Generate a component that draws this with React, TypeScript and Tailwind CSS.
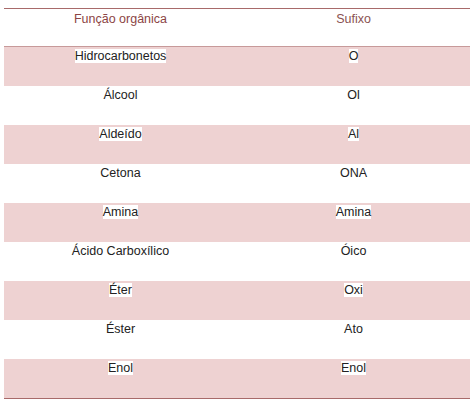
const rows = [
  ['Hidrocarbonetos', 'O'],
  ['Álcool', 'Ol'],
  ['Aldeído', 'Al'],
  ['Cetona', 'ONA'],
  ['Amina', 'Amina'],
  ['Ácido Carboxílico', 'Óico'],
  ['Éter', 'Oxi'],
  ['Éster', 'Ato'],
  ['Enol', 'Enol'],
];

export default function App() {
  return (
    <div className="w-[474px] h-[406px] bg-white pt-2 px-1 font-['Liberation_Sans',Arial,sans-serif] text-[12.5px] leading-[17px] text-[#222]">
      <div className="border-t border-b border-[#a86a6a]">
        {/* Header */}
        <div className="grid grid-cols-2 h-[38px] pt-[2px] text-center text-[#8c4545] border-b border-[#c79a9a]">
          <div>Função orgânica</div>
          <div className="text-[#8a5252]">Sufixo</div>
        </div>
        {rows.map(([fn, suf], i) => {
          const pink = i % 2 === 0;
          return (
            <div
              key={fn}
              className={`grid grid-cols-2 h-[39px] pt-[1px] text-center ${pink ? 'bg-[#eed2d2]' : 'bg-white'}`}
            >
              <div>
                <span className="bg-white">{fn}</span>
              </div>
              <div>
                <span className="bg-white">{suf}</span>
              </div>
            </div>
          );
        })}
      </div>
    </div>
  );
}
